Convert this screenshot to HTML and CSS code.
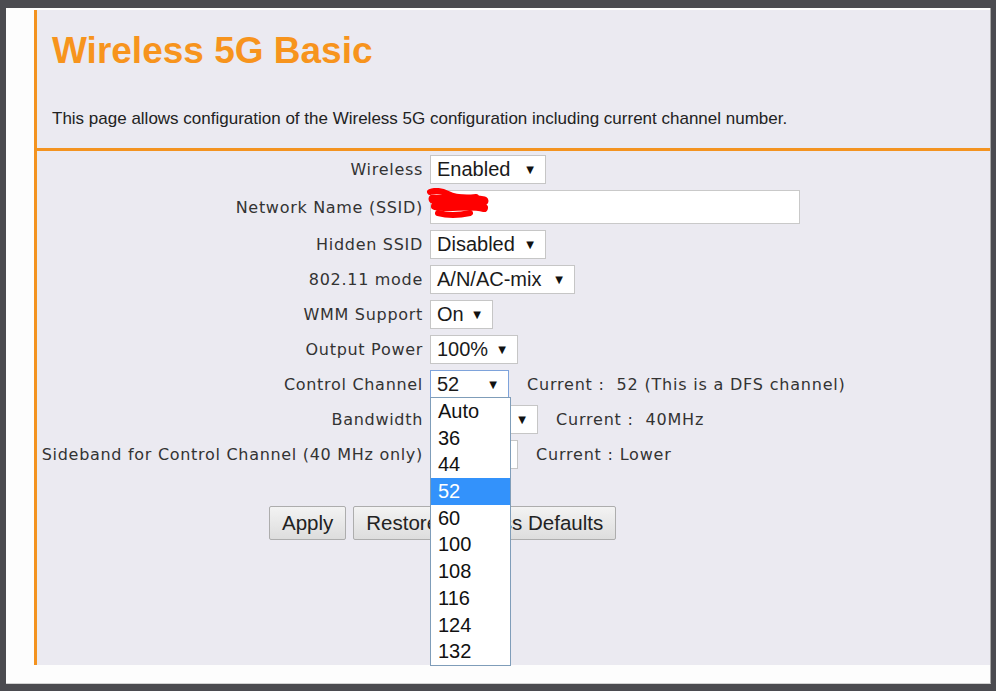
FILE: index.html
```html
<!DOCTYPE html>
<html lang="en">
<head>
<meta charset="utf-8">
<title>Wireless 5G Basic</title>
<link rel="stylesheet" href="styles.css">
</head>
<body>
<div class="screen">
  <div class="frame">
    <section class="panel">
      <header class="panel-head">
        <h1 class="title">Wireless 5G Basic</h1>
        <p class="intro">This page allows configuration of the Wireless 5G configuration including current channel number.</p>
      </header>

      <form class="settings">
        <div class="grid">
          <label class="lbl">Wireless</label>
          <div class="field">
            <span class="select sel-state"><span class="val">Enabled</span><span class="arrow">▼</span></span>
          </div>

          <label class="lbl">Network Name (SSID)</label>
          <div class="field">
            <span class="text-input">
              <svg class="scribble" width="66" height="34" viewBox="0 0 66 34" aria-hidden="true">
                <g fill="none" stroke="#ff0000" stroke-linecap="round" stroke-linejoin="round">
                  <path d="M4 4 Q12 1 22 6 T50 9" stroke-width="6"/>
                  <path d="M7 11 C20 13 40 9 58 13" stroke-width="9"/>
                  <path d="M9 18 C24 21 42 16 58 20" stroke-width="8"/>
                  <path d="M12 25 Q26 29 44 25" stroke-width="6"/>
                </g>
              </svg>
            </span>
          </div>

          <label class="lbl">Hidden SSID</label>
          <div class="field">
            <span class="select sel-state"><span class="val">Disabled</span><span class="arrow">▼</span></span>
          </div>

          <label class="lbl">802.11 mode</label>
          <div class="field">
            <span class="select sel-mode"><span class="val">A/N/AC-mix</span><span class="arrow">▼</span></span>
          </div>

          <label class="lbl">WMM Support</label>
          <div class="field">
            <span class="select sel-wmm"><span class="val">On</span><span class="arrow">▼</span></span>
          </div>

          <label class="lbl">Output Power</label>
          <div class="field">
            <span class="select sel-power"><span class="val">100%</span><span class="arrow">▼</span></span>
          </div>

          <label class="lbl">Control Channel</label>
          <div class="field">
            <span class="select sel-channel is-open"><span class="val">52</span><span class="arrow">▼</span>
              <ul class="options">
                <li>Auto</li>
                <li>36</li>
                <li>44</li>
                <li class="active">52</li>
                <li>60</li>
                <li>100</li>
                <li>108</li>
                <li>116</li>
                <li>124</li>
                <li>132</li>
              </ul>
            </span>
            <span class="current">Current :  52 (This is a DFS channel)</span>
          </div>

          <label class="lbl">Bandwidth</label>
          <div class="field">
            <span class="select sel-bw"><span class="val">40MHz</span><span class="arrow">▼</span></span>
            <span class="current">Current :  40MHz</span>
          </div>

          <label class="lbl">Sideband for Control Channel (40 MHz only)</label>
          <div class="field">
            <span class="select sel-side"><span class="val">Lower</span><span class="arrow">▼</span></span>
            <span class="current">Current : Lower</span>
          </div>
        </div>

        <div class="actions">
          <button type="button" class="btn">Apply</button>
          <button type="button" class="btn">Restore Wireless Defaults</button>
        </div>
      </form>
    </section>
  </div>
</div>
</body>
</html>
```

FILE: styles.css
```css
html, body {
  margin: 0;
  padding: 0;
}

body {
  background: #4b4b50;
  font-family: "Liberation Sans", Arial, sans-serif;
}

.screen {
  box-sizing: border-box;
  width: 996px;
  height: 691px;
  padding: 8px 5px 7px 6px;
  overflow: hidden;
}

.frame {
  box-sizing: border-box;
  height: 100%;
  background: #fdfdfd;
  border-right: 1px solid #a6a6a6;
  border-bottom: 1px solid #d2d2d2;
  padding: 2px 0 0 28px;
}

.panel {
  box-sizing: border-box;
  height: 655px;
  background: #ebeaf1;
  border-left: 3px solid #f39320;
}

/* heading block */
.panel-head {
  padding: 22px 0 20px 15px;
  border-bottom: 3px solid #f39320;
}

.title {
  margin: 0;
  font-family: "Liberation Sans", Arial, sans-serif;
  font-weight: bold;
  font-size: 37px;
  line-height: 37px;
  color: #f7941d;
}

.intro {
  margin: 40px 0 0;
  font-size: 17px;
  line-height: 19px;
  color: #222;
}

/* settings form */
.settings {
  padding-top: 4px;
}

.grid {
  display: grid;
  grid-template-columns: 386px 1fr;
  column-gap: 7px;
  row-gap: 6px;
  align-items: center;
}

.lbl {
  text-align: right;
  font-family: "DejaVu Sans", Verdana, sans-serif;
  font-size: 16px;
  letter-spacing: 0.7px;
  color: #333;
  white-space: nowrap;
}

.field {
  display: flex;
  align-items: center;
}

.select {
  position: relative;
  box-sizing: border-box;
  display: flex;
  align-items: center;
  justify-content: space-between;
  height: 29px;
  padding: 0 11px 0 6px;
  background: #fff;
  border: 1px solid #c6c6c6;
  font-family: "Liberation Sans", Arial, sans-serif;
  font-size: 20px;
  color: #1a1a1a;
}

.arrow {
  font-family: "DejaVu Sans", sans-serif;
  font-size: 10px;
  color: #111;
}

.sel-state { width: 116px; }
.sel-mode { width: 145px; }
.sel-wmm { width: 63px; }
.sel-power { width: 88px; }
.sel-channel { width: 79px; }
.sel-bw { width: 108px; }
.sel-side { width: 88px; }

.is-open {
  border-color: #7ea3db;
}

/* open channel list */
.options {
  position: absolute;
  top: calc(100% - 1px);
  left: -1px;
  z-index: 5;
  box-sizing: border-box;
  width: 81px;
  margin: 0;
  padding: 0;
  list-style: none;
  background: #fff;
  border: 1px solid #7f9db9;
}

.options li {
  height: 26.7px;
  line-height: 26.7px;
  padding-left: 7px;
  font-size: 20px;
  color: #111;
}

.options li.active {
  background: #3392fb;
  color: #fff;
}

.current {
  margin-left: 18px;
  font-family: "DejaVu Sans", Verdana, sans-serif;
  font-size: 16px;
  letter-spacing: 0.8px;
  color: #333;
  white-space: pre;
}

.text-input {
  position: relative;
  box-sizing: border-box;
  display: block;
  width: 370px;
  height: 34px;
  background: #fff;
  border: 1px solid #c9c9c9;
}

.scribble {
  position: absolute;
  left: -5px;
  top: -3px;
}

/* buttons */
.actions {
  display: flex;
  gap: 7px;
  margin: 37px 0 0 232px;
}

.btn {
  box-sizing: border-box;
  height: 34px;
  padding: 0 12px;
  background: linear-gradient(#f3f3f3, #dddddd);
  border: 1px solid #adadad;
  border-radius: 2px;
  font-family: "Liberation Sans", Arial, sans-serif;
  font-size: 20.5px;
  color: #222;
}
```
